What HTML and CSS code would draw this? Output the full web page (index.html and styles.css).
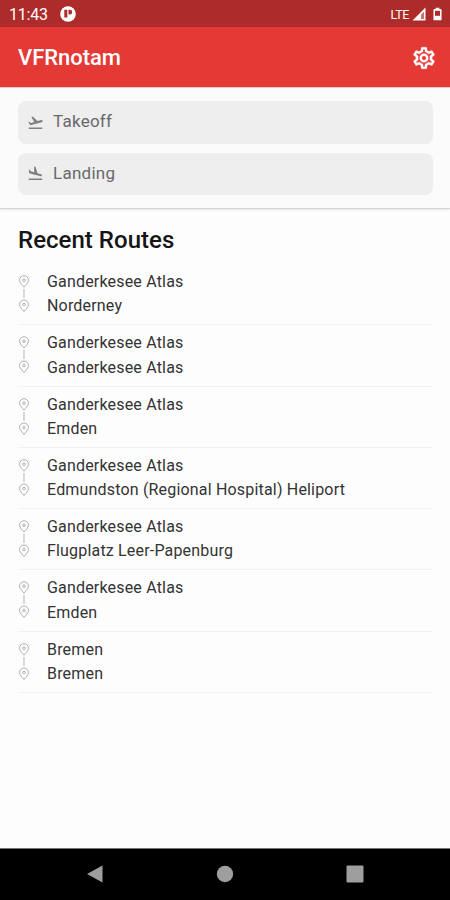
FILE: index.html
```html
<!DOCTYPE html>
<html lang="en">
<head>
<meta charset="utf-8">
<title>VFRnotam</title>
<link rel="stylesheet" href="styles.css">
</head>
<body>
<svg class="defs" width="0" height="0">
  <symbol id="route" viewBox="0 0 12 38">
    <g fill="none" stroke="#b0b0b0" stroke-width="1">
      <path d="M6 12.200C4.300 10 1.500 7.600 1.500 5.200a4.500 4.500 0 0 1 9 0C10.500 7.600 7.700 10 6 12.200z"/>
      <circle cx="6" cy="5.200" r="1.300"/>
      <path d="M6 14v9" stroke="#c4c4c4" stroke-width="1.300"/>
      <path d="M6 36.500C4.300 34.300 1.500 31.900 1.500 29.500a4.500 4.500 0 0 1 9 0C10.500 31.900 7.700 34.300 6 36.500z"/>
      <circle cx="6" cy="29.500" r="1.300"/>
    </g>
  </symbol>
</svg>
<div class="screen">
  <div class="status">
    <span class="clock">11:43</span>
    <svg class="notice" viewBox="0 0 16 16"><circle cx="8" cy="8" r="7.800" fill="#fff"/><path d="M4.300 3.800h3v7.700h-3zM8.500 3.800h1.300a2.400 2.400 0 0 1 0 4.800H8.500z" fill="#ad2b28"/></svg>
    <span class="network">LTE</span>
    <svg class="signal" viewBox="0 0 14 14"><path d="M13.500.5v13H.5z" fill="#fff"/><path d="M12 4.500v7.500H9V7.500z" fill="#ad2b28" opacity=".65"/></svg>
    <svg class="battery" viewBox="0 0 10 14"><path d="M3 0h4v1.500h1.500q1 0 1 1V13q0 1-1 1h-7q-1 0-1-1V2.500q0-1 1-1H3z" fill="#fff"/><path d="M2.200 3.500h5.600v5.500H2.200z" fill="#ad2b28"/></svg>
  </div>
  <header class="appbar">
    <h1>VFRnotam</h1>
    <svg class="gear" viewBox="0 0 24 24"><path fill="#fff" stroke="#fff" stroke-width=".3" d="M19.430 12.980c.04-.32.07-.64.07-.98 0-.34-.03-.66-.07-.98l2.110-1.650c.19-.15.24-.42.12-.64l-2-3.460c-.09-.16-.26-.25-.44-.25-.06 0-.12.01-.17.03l-2.490 1c-.52-.4-1.080-.73-1.690-.98l-.38-2.650C14.460 2.180 14.250 2 14 2h-4c-.25 0-.46.18-.49.42l-.38 2.650c-.61.25-1.170.59-1.690.98l-2.490-1c-.06-.02-.12-.03-.18-.03-.17 0-.34.09-.43.25l-2 3.460c-.13.22-.07.49.12.64l2.110 1.650c-.04.32-.07.65-.07.98 0 .33.03.66.07.98l-2.110 1.650c-.19.15-.24.42-.12.64l2 3.460c.09.16.26.25.44.25.06 0 .12-.01.17-.03l2.490-1c.52.4 1.080.73 1.690.98l.38 2.650c.03.24.24.42.49.42h4c.25 0 .46-.18.49-.42l.38-2.650c.61-.25 1.170-.59 1.690-.98l2.490 1c.06.02.12.03.18.03.17 0 .34-.09.43-.25l2-3.460c.12-.22.07-.49-.12-.64l-2.110-1.650zm-1.980-1.710c.04.31.05.52.05.73 0 .21-.02.43-.05.73l-.14 1.130.89.7 1.080.84-.7 1.210-1.270-.51-1.040-.42-.9.68c-.43.32-.84.56-1.250.73l-1.060.43-.16 1.130-.2 1.350h-1.400l-.19-1.350-.16-1.130-1.060-.43c-.43-.18-.83-.41-1.230-.71l-.91-.7-1.060.43-1.270.51-.7-1.210 1.080-.84.89-.7-.14-1.130c-.03-.31-.05-.54-.05-.74s.02-.43.05-.73l.14-1.130-.89-.7-1.080-.84.7-1.210 1.270.51 1.040.42.9-.68c.43-.32.84-.56 1.250-.73l1.060-.43.16-1.130.2-1.350h1.390l.19 1.350.16 1.130 1.060.43c.43.18.83.41 1.230.71l.91.7 1.060-.43 1.270-.51.7 1.210-1.070.85-.89.7.14 1.130zM12 8c-2.210 0-4 1.790-4 4s1.790 4 4 4 4-1.790 4-4-1.790-4-4-4zm0 6c-1.100 0-2-.9-2-2s.9-2 2-2 2 .9 2 2-.9 2-2 2z"/></svg>
  </header>
  <section class="search">
    <div class="field">
      <svg viewBox="0 0 24 24"><path d="M2.500 19h19v2h-19zm19.570-9.360c-.21-.8-1.040-1.280-1.840-1.060L14.920 10l-6.900-6.430-1.930.51 4.140 7.170-4.970 1.330-1.970-1.540-1.450.39 1.820 3.160.77 1.330 1.600-.43 5.310-1.420 4.350-1.160L21 11.490c.81-.23 1.280-1.050 1.070-1.850z"/></svg>
      <span>Takeoff</span>
    </div>
    <div class="field">
      <svg viewBox="0 0 24 24"><path d="M2.500 19h19v2h-19zm7.180-5.730l4.350 1.160 5.310 1.420c.8.21 1.620-.26 1.840-1.060.21-.8-.26-1.620-1.060-1.840l-5.310-1.420-2.760-9.020L10.120 2v8.280L5.150 8.950l-.93-2.320-1.450-.39v5.170l1.600.43 5.310 1.430z"/></svg>
      <span>Landing</span>
    </div>
  </section>
  <main>
    <h2>Recent Routes</h2>
    <ul>
      <li><svg><use href="#route"/></svg><div><p>Ganderkesee Atlas</p><p>Norderney</p></div></li>
      <li><svg><use href="#route"/></svg><div><p>Ganderkesee Atlas</p><p>Ganderkesee Atlas</p></div></li>
      <li><svg><use href="#route"/></svg><div><p>Ganderkesee Atlas</p><p>Emden</p></div></li>
      <li><svg><use href="#route"/></svg><div><p>Ganderkesee Atlas</p><p>Edmundston (Regional Hospital) Heliport</p></div></li>
      <li><svg><use href="#route"/></svg><div><p>Ganderkesee Atlas</p><p>Flugplatz Leer-Papenburg</p></div></li>
      <li><svg><use href="#route"/></svg><div><p>Ganderkesee Atlas</p><p>Emden</p></div></li>
      <li><svg><use href="#route"/></svg><div><p>Bremen</p><p>Bremen</p></div></li>
    </ul>
  </main>
  <nav>
    <svg viewBox="0 0 18 18"><path d="M16.500.5v17L1 9z"/></svg>
    <svg viewBox="0 0 18 18"><circle cx="9" cy="9" r="8.200"/></svg>
    <svg viewBox="0 0 18 18"><rect x=".5" y=".5" width="17" height="17" rx="1"/></svg>
  </nav>
</div>
</body>
</html>
```
FILE: styles.css
```css
* { box-sizing: border-box; margin: 0; padding: 0; }
body { font-family: Roboto, sans-serif; background: #fdfdfd; }
svg { display: block; flex: none; }
.defs { position: absolute; }
.screen { width: 450px; height: 900px; display: flex; flex-direction: column; overflow: hidden; }
.status { height: 27px; flex: none; background: #ad2b28; color: #fff; display: flex; align-items: center; padding: 1px 8px 0 9px; }
.clock { font-size: 16px; letter-spacing: -.2px; }
.notice { width: 16px; height: 16px; margin-left: 12px; }
.network { font-size: 12.500px; margin-left: auto; letter-spacing: -.4px; }
.signal { width: 14px; height: 14px; margin-left: 3px; }
.battery { width: 9px; height: 14px; margin-left: 7px; }
.appbar { height: 60px; flex: none; background: #e53935; color: #fff; display: flex; align-items: center; justify-content: space-between; padding: 1px 13px 0 18px; }
.appbar h1 { font-size: 22px; font-weight: 500; letter-spacing: -.05px; }
.gear { width: 26px; height: 26px; }
.search { height: 122px; flex: none; padding: 13px 17px 0 18px; display: flex; flex-direction: column; gap: 9px; background: #fbfbfb; border-top: 1px solid #f3c8c6; border-bottom: 1px solid #d6d6d6; box-shadow: 0 1px 2px #0000001a; }
.field { height: 42.500px; border-radius: 8px; background: #eee; display: flex; align-items: center; gap: 9px; padding: 0 9px; color: #696969; font-size: 17px; letter-spacing: .25px; }
.field svg { width: 17px; height: 17px; fill: #808080; }
.field span { margin-top: -2px; }
main { flex: 1; padding: 15px 17px 0 18px; }
h2 { font-size: 24px; line-height: 32px; font-weight: 500; color: #151515; letter-spacing: .03px; }
ul { list-style: none; margin-top: 8px; }
li { height: 61.300px; display: flex; align-items: flex-start; padding-top: 6px; gap: 17px; border-bottom: 1px solid #f2f2f2; }
li svg { width: 12px; height: 38px; margin-top: 5px; }
li p { font-size: 16px; line-height: 24.300px; color: #333; letter-spacing: .18px; white-space: nowrap; }
nav { height: 52px; flex: none; background: #000; border-top: 1px solid #777; display: flex; align-items: center; justify-content: space-between; padding: 0 86px 2px; }
nav svg { width: 18px; height: 18px; fill: #9e9e9e; }
```
